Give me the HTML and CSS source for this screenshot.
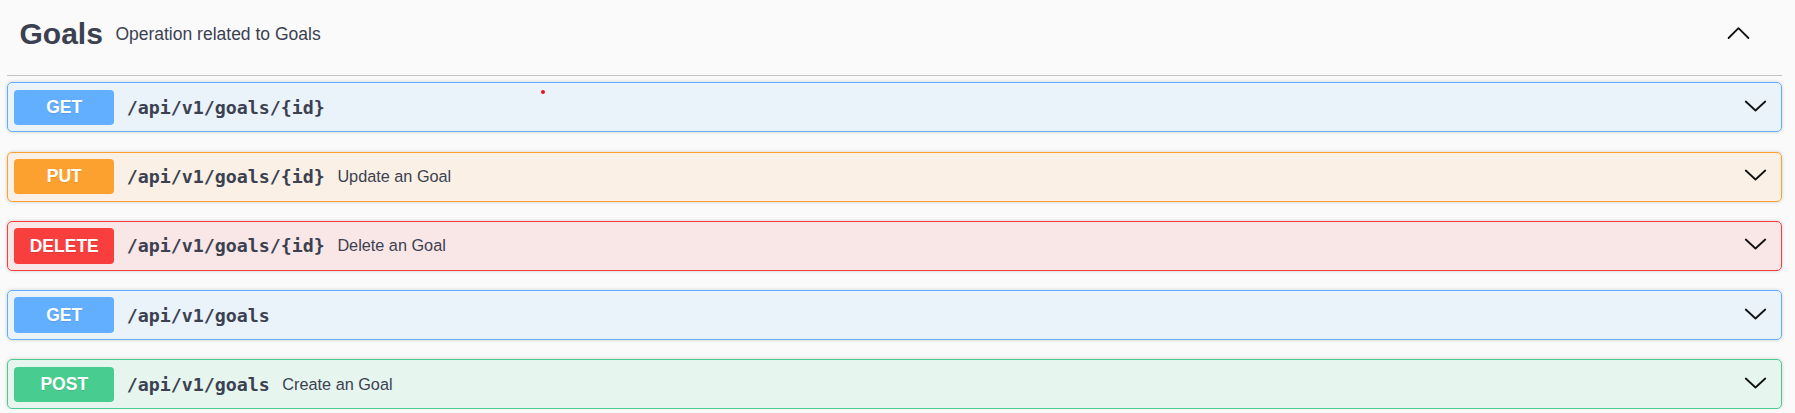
FILE: index.html
```html
<!DOCTYPE html>
<html lang="en">
<head>
<meta charset="utf-8">
<title>Goals</title>
<link rel="stylesheet" href="styles.css">
</head>
<body>
<div class="tag-section">
  <h3 class="tag-header">
    <span class="tag-name">Goals</span>
    <small class="tag-desc">Operation related to Goals</small>
    <svg class="arrow" width="25" height="25" viewBox="0 0 25 25" aria-hidden="true"><polyline points="2.6,16 12.5,6.2 22.4,16"/></svg>
  </h3>
  <div class="ops">
    <div class="opblock get">
      <span class="method">GET</span>
      <span class="path">/api/v1/goals/{id}</span>
      <svg class="arrow" width="25" height="25" viewBox="0 0 25 25" aria-hidden="true"><polyline points="2.75,6.5 12.5,15.5 22.25,6.5"/></svg>
      <span class="dot"></span>
    </div>
    <div class="opblock put">
      <span class="method">PUT</span>
      <span class="path">/api/v1/goals/{id}</span>
      <span class="desc">Update an Goal</span>
      <svg class="arrow" width="25" height="25" viewBox="0 0 25 25" aria-hidden="true"><polyline points="2.75,6.5 12.5,15.5 22.25,6.5"/></svg>
    </div>
    <div class="opblock delete">
      <span class="method">DELETE</span>
      <span class="path">/api/v1/goals/{id}</span>
      <span class="desc">Delete an Goal</span>
      <svg class="arrow" width="25" height="25" viewBox="0 0 25 25" aria-hidden="true"><polyline points="2.75,6.5 12.5,15.5 22.25,6.5"/></svg>
    </div>
    <div class="opblock get">
      <span class="method">GET</span>
      <span class="path">/api/v1/goals</span>
      <svg class="arrow" width="25" height="25" viewBox="0 0 25 25" aria-hidden="true"><polyline points="2.75,6.5 12.5,15.5 22.25,6.5"/></svg>
    </div>
    <div class="opblock post">
      <span class="method">POST</span>
      <span class="path">/api/v1/goals</span>
      <span class="desc">Create an Goal</span>
      <svg class="arrow" width="25" height="25" viewBox="0 0 25 25" aria-hidden="true"><polyline points="2.75,6.5 12.5,15.5 22.25,6.5"/></svg>
    </div>
  </div>
</div>
</body>
</html>
```

FILE: styles.css
```css
html, body {
  margin: 0;
  padding: 0;
  background: #fafafa;
}

body {
  font-family: "Liberation Sans", Arial, sans-serif;
  color: #3b4151;
}

.tag-section {
  margin: 0 13px 0 7px;
}

.tag-header {
  display: flex;
  align-items: center;
  margin: 0 0 6.25px;
  padding: 17px 31.5px 24px 12.5px;
  border-bottom: 1px solid rgba(59, 65, 81, 0.3);
  font-size: 30px;
  line-height: 34px;
  font-weight: bold;
  color: #3b4151;
}

.tag-desc {
  flex: 1;
  padding: 0 12.5px;
  font-size: 17.5px;
  line-height: normal;
  font-weight: normal;
}

.arrow {
  flex: none;
  display: block;
}

.arrow polyline {
  fill: none;
  stroke: #111;
  stroke-width: 1.8;
  stroke-linecap: round;
  stroke-linejoin: round;
}

.ops {
  display: flex;
  flex-direction: column;
  gap: 19.25px;
}

.opblock {
  position: relative;
  display: flex;
  align-items: center;
  height: 50px;
  box-sizing: border-box;
  padding: 0 13px 0 6.25px;
  border: 1px solid;
  border-radius: 5px;
  box-shadow: 0 0 3.75px rgba(0, 0, 0, 0.19);
}

.opblock .arrow {
  margin-left: auto;
}

.method {
  flex: none;
  width: 100px;
  padding: 7.5px 0;
  line-height: 20.5px;
  border-radius: 3.75px;
  text-align: center;
  font-size: 17.5px;
  font-weight: bold;
  color: #fff;
  text-shadow: 0 1px 0 rgba(0, 0, 0, 0.1);
}

.path {
  padding: 0 12.5px;
  font-family: "DejaVu Sans Mono", "Liberation Mono", monospace;
  font-size: 18.3px;
  font-weight: bold;
  color: #3b4151;
}

.desc {
  font-size: 16.25px;
  color: #3b4151;
}

.get { border-color: #61affe; background: rgba(97, 175, 254, 0.1); }
.get .method { background: #61affe; }

.put { border-color: #fca130; background: rgba(252, 161, 48, 0.1); }
.put .method { background: #fca130; }

.delete { border-color: #f93e3e; background: rgba(249, 62, 62, 0.1); }
.delete .method { background: #f93e3e; }

.post { border-color: #49cc90; background: rgba(73, 204, 144, 0.1); }
.post .method { background: #49cc90; }

.dot {
  position: absolute;
  left: 533px;
  top: 6.5px;
  width: 4px;
  height: 4px;
  border-radius: 50%;
  background: #e8141b;
}
```
